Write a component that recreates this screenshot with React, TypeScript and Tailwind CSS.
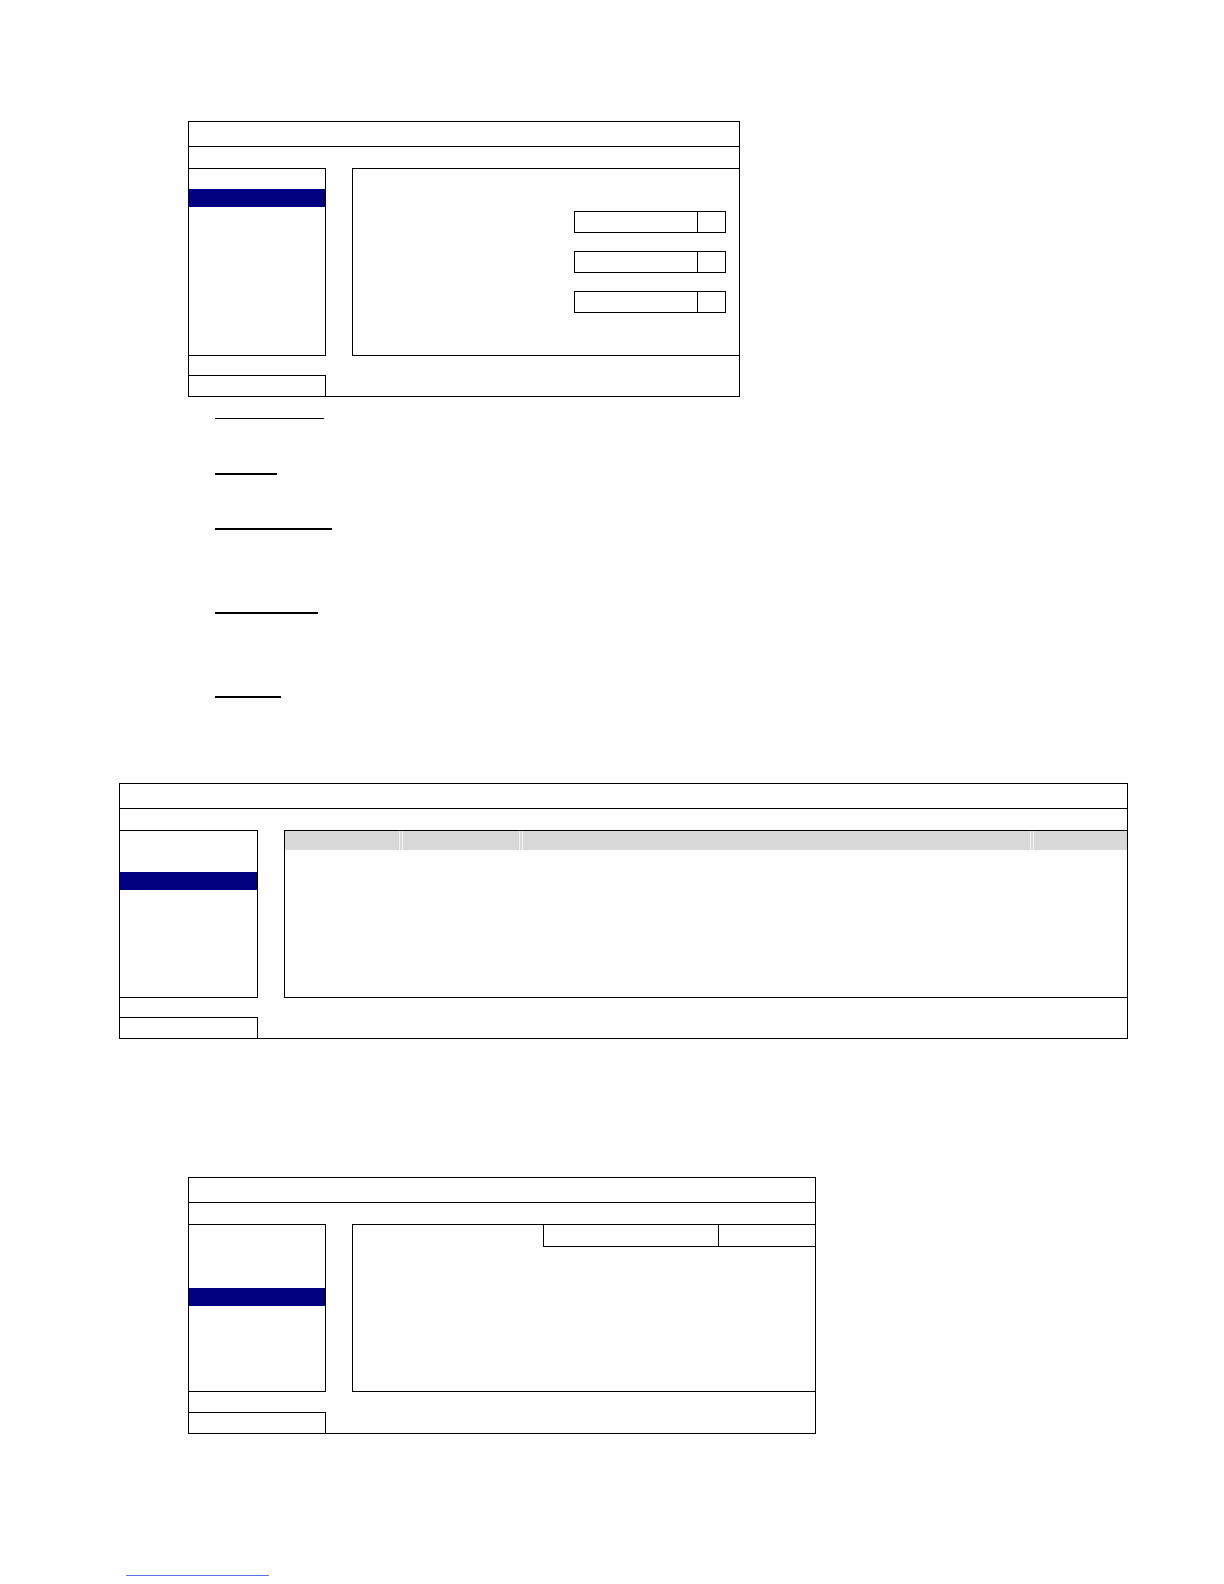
import React from "react";

function Dropdown() {
  return (
    <div className="flex h-[22px] w-[152px] border border-black">
      <div className="flex-1" />
      <div className="w-[28px] border-l border-black" />
    </div>
  );
}

function MenuList({ barTop, width }: { barTop: string; width: string }) {
  return (
    <div className={`h-full ${width} border-y border-r border-black ${barTop}`}>
      <div className="h-[18px] bg-[#000080]" />
    </div>
  );
}

function Footer({ width }: { width: string }) {
  return (
    <div className="flex flex-1 flex-col justify-end">
      <div className={`h-[21px] ${width} border-t border-r border-black`} />
    </div>
  );
}

function ColSep() {
  return <div className="h-full w-[4px] border-x border-[#f2f2f2]" />;
}

export default function App() {
  return (
    <div className="flex min-h-[1584px] w-[1224px] flex-col bg-white font-['Liberation_Sans',sans-serif]">
      {/* screen 1 */}
      <div className="ml-[188px] mt-[121px] flex h-[276px] w-[552px] flex-col border border-black">
        <div className="h-[25px] border-b border-black" />
        <div className="h-[21px]" />
        <div className="flex h-[188px]">
          <MenuList width="w-[137px]" barTop="pt-[20px]" />
          <div className="w-[26px]" />
          <div className="flex flex-1 flex-col items-end gap-[18px] border-y border-l border-black pr-[13px] pt-[42px]">
            <Dropdown />
            <Dropdown />
            <Dropdown />
          </div>
        </div>
        <Footer width="w-[137px]" />
      </div>

      {/* underlined headings */}
      <div className="ml-[215px] mt-[21px] h-px w-[109px] bg-black" />
      <div className="ml-[215px] mt-[54px] h-[2px] w-[62px] bg-black" />
      <div className="ml-[215px] mt-[53px] h-[2px] w-[117px] bg-black" />
      <div className="ml-[215px] mt-[82px] h-[2px] w-[103px] bg-black" />
      <div className="ml-[215px] mt-[82px] h-[2px] w-[66px] bg-black" />

      {/* screen 2 */}
      <div className="ml-[119px] mt-[85px] flex h-[256px] w-[1009px] flex-col border border-black">
        <div className="h-[25px] border-b border-black" />
        <div className="h-[21px]" />
        <div className="flex h-[168px]">
          <MenuList width="w-[138px]" barTop="pt-[41px]" />
          <div className="w-[26px]" />
          <div className="flex flex-1 flex-col border-y border-l border-black">
            <div className="flex h-[19px] bg-[#d9d9d9]">
              <div className="w-[114px]" />
              <ColSep />
              <div className="w-[116px]" />
              <ColSep />
              <div className="w-[507px]" />
              <ColSep />
              <div className="flex-1" />
            </div>
          </div>
        </div>
        <Footer width="w-[138px]" />
      </div>

      {/* screen 3 */}
      <div className="ml-[188px] mt-[138px] flex h-[257px] w-[628px] flex-col border border-black">
        <div className="h-[25px] border-b border-black" />
        <div className="h-[21px]" />
        <div className="flex h-[168px]">
          <MenuList width="w-[137px]" barTop="pt-[63px]" />
          <div className="w-[26px]" />
          <div className="flex flex-1 flex-col items-end border-y border-l border-black">
            <div className="flex h-[22px] w-[272px] border-l border-b border-black">
              <div className="w-[175px] border-r border-black" />
              <div className="flex-1" />
            </div>
          </div>
        </div>
        <Footer width="w-[137px]" />
      </div>

      {/* link underline */}
      <div className="ml-[126px] mt-[141px] h-px w-[143px] bg-[#5b74e6]" />
    </div>
  );
}
